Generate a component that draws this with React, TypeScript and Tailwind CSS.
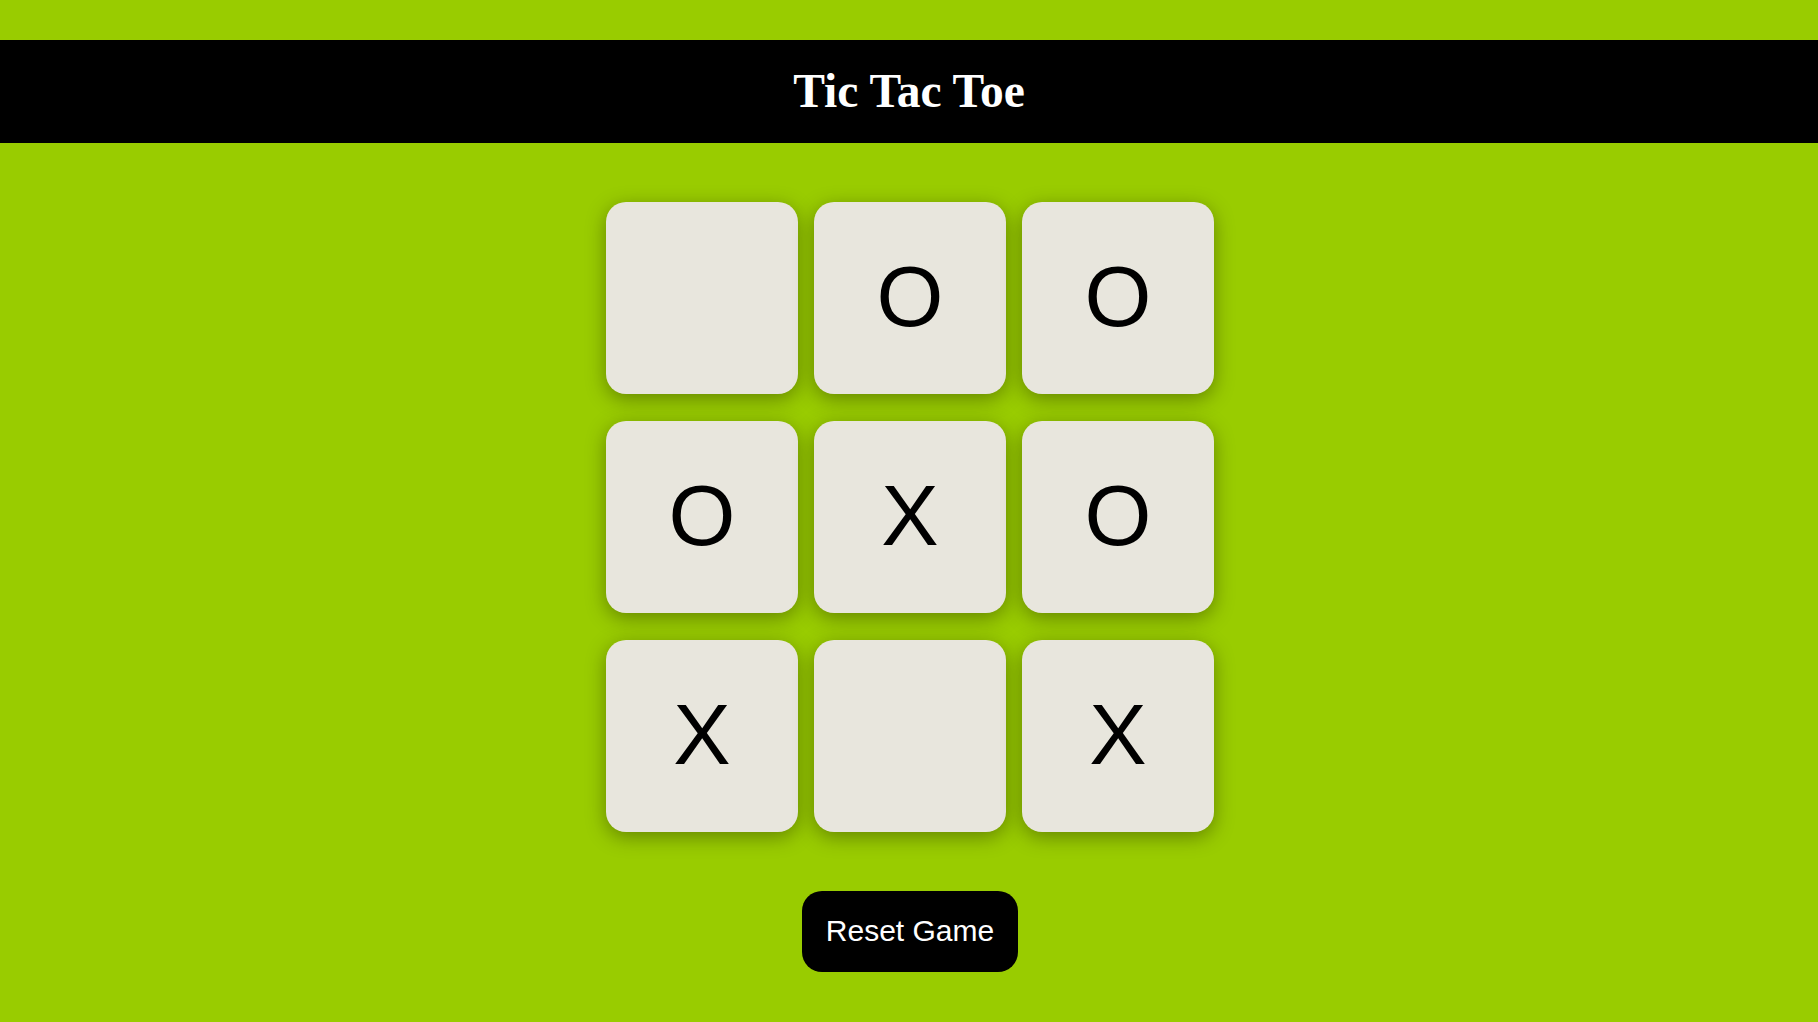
const board = ['', 'O', 'O', 'O', 'X', 'O', 'X', '', 'X'];

export default function App() {
  return (
    <div className="min-h-screen w-full bg-[#99cc00] flex flex-col items-center pt-[40px]">
      <header className="w-full h-[103px] bg-black flex items-center justify-center">
        <h1 className="text-white text-[47.5px] font-bold font-['Liberation_Serif',serif] leading-none">
          Tic Tac Toe
        </h1>
      </header>

      <div className="mt-[59px] ml-[2px] grid grid-cols-[repeat(3,192px)] gap-x-4 gap-y-[27px]">
        {board.map((mark, i) => (
          <div
            key={i}
            className="w-[192px] h-[192px] rounded-[20px] bg-[#e8e6dd] shadow-[0_5px_20px_rgba(0,0,0,0.35)] flex items-center justify-center pb-[4px] text-black text-[86px] font-['Liberation_Sans',Arial,sans-serif] leading-none"
          >
            {mark}
          </div>
        ))}
      </div>

      <button className="mt-[59px] ml-[2px] w-[216px] h-[81px] rounded-[20px] bg-black text-white text-[30px] pb-[2px] font-['Liberation_Sans',Arial,sans-serif]">
        Reset Game
      </button>
    </div>
  );
}
